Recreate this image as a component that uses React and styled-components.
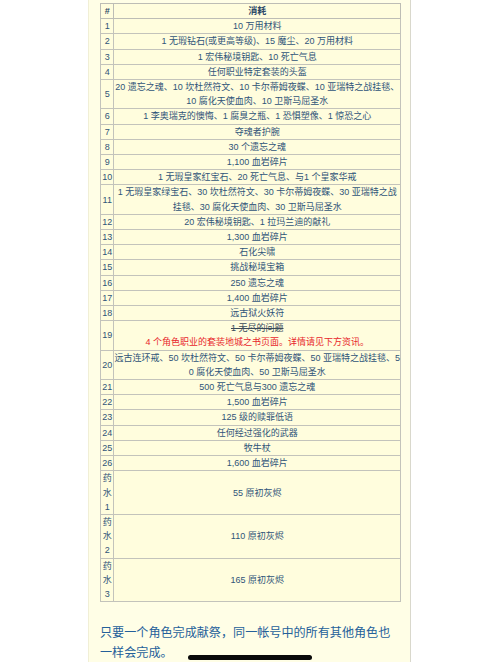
import React from 'react'
import styled, { createGlobalStyle } from 'styled-components'

const GlobalStyle = createGlobalStyle`
  html, body {
    margin: 0;
    padding: 0;
    background: #ffffff;
  }
  body {
    font-family: "Liberation Sans", "Noto Sans CJK SC", sans-serif;
  }
`

const Panel = styled.div`
  margin-left: 88px;
  width: 323px;
  min-height: 662px;
  box-sizing: border-box;
  padding: 3px 10px 0 11px;
  background: #fffee6;
  border-left: 1px solid #f1efd6;
  border-right: 1px solid #d9d8cc;
`

const Table = styled.table`
  width: 301px;
  border-collapse: collapse;
  background: #fffddd;
  color: #2f5479;
  font-size: 9px;
  line-height: 14.2px;
  border: 1px solid #b9b9b2;
`

const Th = styled.th`
  border: 1px solid #bdbdb5;
  padding: 0;
  font-weight: bold;
  text-align: center;
  color: #2c4a68;
  width: ${({ $num }) => ($num ? '16px' : 'auto')};
`

const Td = styled.td`
  border: 1px solid #c3c3bb;
  padding: 0;
  text-align: center;
  white-space: nowrap;
  vertical-align: middle;
  width: ${({ $num }) => ($num ? '16px' : 'auto')};
`

const Strike = styled.span`
  text-decoration: line-through;
  color: #3a4a5a;
`

const Warn = styled.span`
  color: #e8262b;
`

const Note = styled.p`
  margin: 20px 0 0;
  font-family: "Noto Sans CJK SC", sans-serif;
  font-size: 12.1px;
  line-height: 20px;
  color: #24609a;
`

const HomeBar = styled.div`
  position: fixed;
  left: 188px;
  bottom: 2px;
  width: 124px;
  height: 5px;
  border-radius: 3px;
  background: #0a0a0a;
`

const rows = [
  ['1', ['10 万用材料']],
  ['2', ['1 无瑕钻石(或更高等级)、15 魔尘、20 万用材料']],
  ['3', ['1 宏伟秘境钥匙、10 死亡气息']],
  ['4', ['任何职业特定套装的头盔']],
  ['5', ['20 遗忘之魂、10 坎杜然符文、10 卡尔蒂姆夜蝶、10 亚瑞特之战挂毯、', '10 腐化天使血肉、10 卫斯马屈圣水']],
  ['6', ['1 李奥瑞克的懊悔、1 腐臭之瓶、1 恐惧塑像、1 惊恐之心']],
  ['7', ['夺魂者护腕']],
  ['8', ['30 个遗忘之魂']],
  ['9', ['1,100 血岩碎片']],
  ['10', ['1 无瑕皇家红宝石、20 死亡气息、与1 个皇家华戒']],
  ['11', ['1 无瑕皇家绿宝石、30 坎杜然符文、30 卡尔蒂姆夜蝶、30 亚瑞特之战', '挂毯、30 腐化天使血肉、30 卫斯马屈圣水']],
  ['12', ['20 宏伟秘境钥匙、1 拉玛兰迪的献礼']],
  ['13', ['1,300 血岩碎片']],
  ['14', ['石化尖啸']],
  ['15', ['挑战秘境宝箱']],
  ['16', ['250 遗忘之魂']],
  ['17', ['1,400 血岩碎片']],
  ['18', ['远古狱火妖符']],
  ['19', 'special'],
  ['20', ['远古连环戒、50 坎杜然符文、50 卡尔蒂姆夜蝶、50 亚瑞特之战挂毯、5', '0 腐化天使血肉、50 卫斯马屈圣水']],
  ['21', ['500 死亡气息与300 遗忘之魂']],
  ['22', ['1,500 血岩碎片']],
  ['23', ['125 级的赎罪低语']],
  ['24', ['任何经过强化的武器']],
  ['25', ['牧牛杖']],
  ['26', ['1,600 血岩碎片']],
  [['药', '水', '1'], ['55 原初灰烬']],
  [['药', '水', '2'], ['110 原初灰烬']],
  [['药', '水', '3'], ['165 原初灰烬']],
]

const Lines = ({ lines }) => (
  <>
    {lines.map((line, i) => (
      <React.Fragment key={i}>
        {i > 0 && <br />}
        {line}
      </React.Fragment>
    ))}
  </>
)

const App = () => (
  <>
    <GlobalStyle />
    <Panel>
      <Table>
        <thead>
          <tr>
            <Th $num>#</Th>
            <Th>消耗</Th>
          </tr>
        </thead>
        <tbody>
          {rows.map(([num, cost], i) => (
            <tr key={i}>
              <Td $num>{Array.isArray(num) ? <Lines lines={num} /> : num}</Td>
              <Td>
                {cost === 'special' ? (
                  <>
                    <Strike>1 无尽的问题</Strike>
                    <br />
                    <Warn>4 个角色职业的套装地城之书页面。详情请见下方资讯。</Warn>
                  </>
                ) : (
                  <Lines lines={cost} />
                )}
              </Td>
            </tr>
          ))}
        </tbody>
      </Table>
      <Note>只要一个角色完成献祭，同一帐号中的所有其他角色也一样会完成。</Note>
    </Panel>
    <HomeBar />
  </>
)

export default App
